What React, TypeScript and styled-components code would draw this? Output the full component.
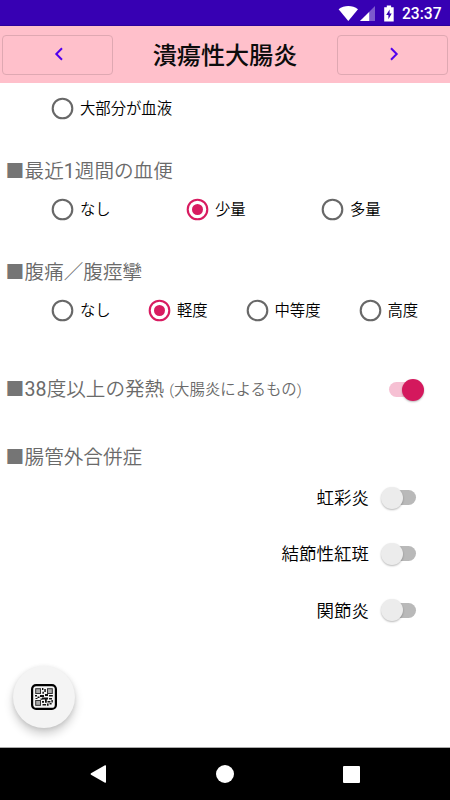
import React from "react";
import styled, { createGlobalStyle } from "styled-components";

const GlobalStyle = createGlobalStyle`
  * { box-sizing: border-box; }
  body {
    margin: 0;
    background: #fff;
    font-family: Roboto, "Noto Sans CJK JP", sans-serif;
    overflow: hidden;
  }
`;

const Screen = styled.div`
  width: 450px;
  height: 800px;
  display: flex;
  flex-direction: column;
  background: #fff;
  position: relative;
`;

const StatusBar = styled.header`
  height: 26px;
  flex: none;
  display: flex;
  align-items: center;
  justify-content: flex-end;
  padding: 1px 9px 0 0;
  background: #3700b3;
  box-shadow: inset 0 -1px #2c009c;
  color: #fff;
`;

const StatusIcons = styled.svg`
  display: block;
  margin-right: 7.5px;
`;

const Clock = styled.span`
  width: 39px;
  font-size: 15.6px;
  font-weight: 500;
  line-height: 24px;
  white-space: nowrap;
`;

const TitleBar = styled.div`
  height: 57px;
  flex: none;
  display: flex;
  align-items: center;
  justify-content: space-between;
  padding: 0 2px;
  background: #ffc0cb;
`;

const NavButton = styled.button`
  width: 111px;
  height: 40px;
  padding: 0 0 1px 3px;
  display: flex;
  align-items: center;
  justify-content: center;
  background: transparent;
  border: 1px solid #dfa8b2;
  border-radius: 4px;
`;

const Title = styled.h1`
  margin: 2px 0 0;
  font-size: 24.1px;
  line-height: 36px;
  font-weight: 500;
  color: #0c0c0c;
  white-space: nowrap;
`;

const Content = styled.main`
  flex: 1;
  display: flex;
  flex-direction: column;
`;

const Section = styled.h2<{ $top: number }>`
  margin: ${(p) => p.$top}px 0 0;
  height: 32px;
  padding: 2px 0 0 5px;
  display: flex;
  align-items: center;
  font-size: 19.6px;
  line-height: 32px;
  font-weight: 350;
  color: #6a6a6a;
  white-space: nowrap;
`;

const Square = styled.span`
  width: 19.6px;
  padding-left: 0.5px;
  font-size: 18.8px;
  color: #757575;
`;

const Digits = styled.span`
  font-weight: 400;
`;

const Note = styled.small`
  margin-left: 5px;
  font-size: 15.4px;
`;

const SectionSwitch = styled.span`
  margin: 0 26px 0 auto;
`;

const RadioRow = styled.div<{ $top: number; $columns: string }>`
  display: grid;
  grid-template-columns: ${(p) => p.$columns};
  height: 32px;
  margin-top: ${(p) => p.$top}px;
  padding-left: 51px;
`;

const RadioOption = styled.label`
  display: flex;
  align-items: center;
  gap: 6px;
  font-size: 15.35px;
  line-height: 32px;
  font-weight: 350;
  color: #000;
  white-space: nowrap;
`;

const RadioIcon = styled.svg`
  margin-bottom: 2px;
`;

const SwitchRow = styled.label<{ $top: number }>`
  display: flex;
  align-items: center;
  justify-content: flex-end;
  gap: 11.5px;
  height: 32px;
  margin-top: ${(p) => p.$top}px;
  padding-right: 32.5px;
  font-size: 17.5px;
  line-height: 32px;
  font-weight: 350;
  color: #000;
`;

const SwitchBody = styled.span<{ $on: boolean }>`
  display: grid;
  align-items: center;
  width: 37px;
  height: 24px;
  margin-bottom: 1px;

  &::before {
    content: "";
    grid-area: 1 / 1;
    width: 33px;
    height: 15px;
    margin-left: 2px;
    border-radius: 8px;
    background: ${(p) => (p.$on ? "#f6c0d3" : "#b9b9b9")};
  }
`;

const Thumb = styled.span<{ $on: boolean }>`
  grid-area: 1 / 1;
  justify-self: ${(p) => (p.$on ? "end" : "start")};
  width: 22px;
  height: 22px;
  border-radius: 50%;
  background: ${(p) => (p.$on ? "#d4185d" : "#ececec")};
  box-shadow: 0 1px 2px rgba(0, 0, 0, 0.28);
`;

const Fab = styled.button`
  position: absolute;
  left: 13px;
  top: 665.5px;
  width: 62px;
  height: 62px;
  padding: 0;
  display: flex;
  align-items: center;
  justify-content: center;
  border: 0;
  border-radius: 50%;
  background: #f4f4f4;
  box-shadow: 0 6px 10px rgba(0, 0, 0, 0.19), 0 1px 4px rgba(0, 0, 0, 0.1);
`;

const SystemNav = styled.nav`
  height: 53px;
  flex: none;
  display: flex;
  justify-content: space-between;
  align-items: center;
  padding: 0 90px 0 90px;
  border-top: 1px solid #aaa;
  background: #000;
`;

const Radio = ({ label, checked = false }: { label: string; checked?: boolean }) => (
  <RadioOption>
    <RadioIcon width="23" height="23" viewBox="0 0 23 23" fill="none">
      <circle cx="11.5" cy="11.5" r="9.8" stroke={checked ? "#d81b60" : "#686868"} strokeWidth="2.1" />
      {checked && <circle cx="11.5" cy="11.5" r="5.5" fill="#d81b60" />}
    </RadioIcon>
    {label}
  </RadioOption>
);

const Switch = ({ on = false }: { on?: boolean }) => (
  <SwitchBody $on={on}>
    <Thumb $on={on} />
  </SwitchBody>
);

const QrIcon = () => (
  <svg width="26" height="26" viewBox="0 0 26 26">
    <rect x="1.1" y="1.1" width="23.8" height="23.8" rx="4" fill="#f4f4f4" stroke="#000" strokeWidth="2.2" />
    <g fill="#aaa" stroke="#333" strokeWidth="1">
      <rect x="4.7" y="4.7" width="4.8" height="4.8" />
      <rect x="16.5" y="4.7" width="4.8" height="4.8" />
      <rect x="4.7" y="16.5" width="4.8" height="4.8" />
    </g>
    <path
      d="M11 4h1.4v2H11zM13.3 5h1.5v3h-1.5zM11.4 7.7h1.5v2h-1.5zM4 11h2v1.4H4zM6.5 12.5h2V14h-2zM4.5 14h2v1h-2zM9 11h4v2H9zM14 10h3v2h-3zM18 11h3.8v1.4H18zM11 13.5h6v2h-6zM18 14h3v1.5h-3zM9.5 14.5h2v1.2h-2zM11 17h2v1.8h-2zM14 15.5h1.8v3.2H14zM16.5 17h3v1.4h-3zM20.4 16h1.4v2.4h-1.4zM11.5 20h3.6v1.6h-3.6zM16 19.5h1.6v2.2H16zM18.6 19h2v1.5h-2z"
      fill="#111"
    />
  </svg>
);

export default function App() {
  return (
    <>
      <GlobalStyle />
      <Screen>
        <StatusBar>
          <StatusIcons width="57" height="18" viewBox="0 0 57 18" fill="#fff">
            <path d="M.6 4.2C6.2-.1 14.4-.1 20 4.2L10.3 16z" />
            <path d="M37 1v15H22z" opacity=".35" />
            <path d="M31.2 7v9H22z" />
            <path
              fillRule="evenodd"
              d="M46.2 2.2h2.6V.6h4.3v1.6h2.6V16.5h-9.5zM51.6 4.5l-3.4 5.6h2.2v4.2l3.3-5.7h-2.1z"
            />
          </StatusIcons>
          <Clock>23:37</Clock>
        </StatusBar>
        <TitleBar>
          <NavButton aria-label="前へ">
            <svg width="10" height="14" viewBox="0 0 10 14" fill="none">
              <path d="M8 1.2 2.3 7 8 12.8" stroke="#5200ee" strokeWidth="2" />
            </svg>
          </NavButton>
          <Title>潰瘍性大腸炎</Title>
          <NavButton aria-label="次へ">
            <svg width="10" height="14" viewBox="0 0 10 14" fill="none">
              <path d="M2 1.2 7.7 7 2 12.8" stroke="#5200ee" strokeWidth="2" />
            </svg>
          </NavButton>
        </TitleBar>
        <Content>
          <RadioRow $top={10} $columns="135px">
            <Radio label="大部分が血液" />
          </RadioRow>
          <Section $top={30}>
            <Square>■</Square>最近<Digits>1</Digits>週間の血便
          </Section>
          <RadioRow $top={7} $columns="135px 135px 118px">
            <Radio label="なし" />
            <Radio label="少量" checked />
            <Radio label="多量" />
          </RadioRow>
          <Section $top={30}>
            <Square>■</Square>腹痛／腹痙攣
          </Section>
          <RadioRow $top={7} $columns="97px 97.5px 113px 80px">
            <Radio label="なし" />
            <Radio label="軽度" checked />
            <Radio label="中等度" />
            <Radio label="高度" />
          </RadioRow>
          <Section $top={46}>
            <Square>■</Square>
            <Digits>38</Digits>度以上の発熱<Note>(大腸炎によるもの)</Note>
            <SectionSwitch>
              <Switch on />
            </SectionSwitch>
          </Section>
          <Section $top={36}>
            <Square>■</Square>腸管外合併症
          </Section>
          <SwitchRow $top={9}>
            虹彩炎
            <Switch />
          </SwitchRow>
          <SwitchRow $top={24}>
            結節性紅斑
            <Switch />
          </SwitchRow>
          <SwitchRow $top={24.5}>
            関節炎
            <Switch />
          </SwitchRow>
        </Content>
        <SystemNav>
          <svg width="17" height="20" viewBox="0 0 17 20" fill="#fff">
            <path d="M15 1.3q1-.4 1 .7v16q0 1.1-1 .7L1 10.7Q0 10 1 9.3z" />
          </svg>
          <svg width="18" height="18" viewBox="0 0 18 18" fill="#fff">
            <circle cx="9" cy="9" r="9" />
          </svg>
          <svg width="17" height="17" viewBox="0 0 17 17" fill="#fff">
            <rect width="17" height="17" rx="1" />
          </svg>
        </SystemNav>
        <Fab aria-label="QRコード">
          <QrIcon />
        </Fab>
      </Screen>
    </>
  );
}
